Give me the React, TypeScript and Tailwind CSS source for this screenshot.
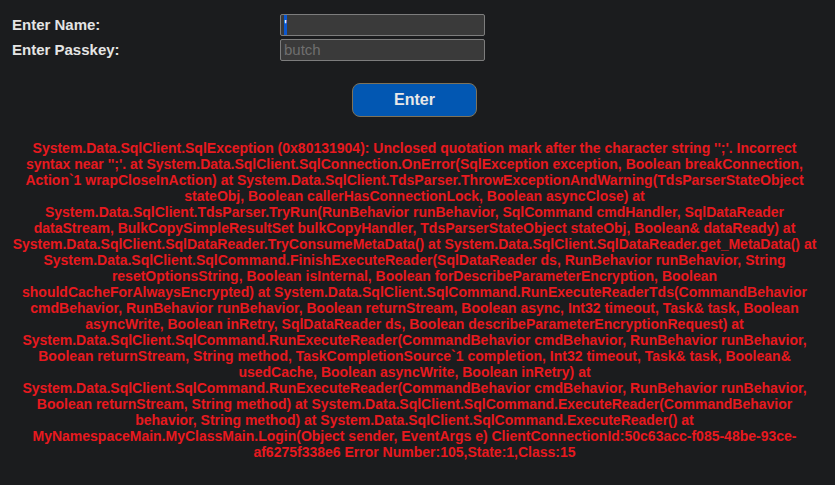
import { useEffect, useRef } from "react";

const errorText =
  "System.Data.SqlClient.SqlException (0x80131904): Unclosed quotation mark after the character string '';'. Incorrect syntax near '';'. at System.Data.SqlClient.SqlConnection.OnError(SqlException exception, Boolean breakConnection, Action`1 wrapCloseInAction) at System.Data.SqlClient.TdsParser.ThrowExceptionAndWarning(TdsParserStateObject stateObj, Boolean callerHasConnectionLock, Boolean asyncClose) at System.Data.SqlClient.TdsParser.TryRun(RunBehavior runBehavior, SqlCommand cmdHandler, SqlDataReader dataStream, BulkCopySimpleResultSet bulkCopyHandler, TdsParserStateObject stateObj, Boolean& dataReady) at System.Data.SqlClient.SqlDataReader.TryConsumeMetaData() at System.Data.SqlClient.SqlDataReader.get_MetaData() at System.Data.SqlClient.SqlCommand.FinishExecuteReader(SqlDataReader ds, RunBehavior runBehavior, String resetOptionsString, Boolean isInternal, Boolean forDescribeParameterEncryption, Boolean shouldCacheForAlwaysEncrypted) at System.Data.SqlClient.SqlCommand.RunExecuteReaderTds(CommandBehavior cmdBehavior, RunBehavior runBehavior, Boolean returnStream, Boolean async, Int32 timeout, Task& task, Boolean asyncWrite, Boolean inRetry, SqlDataReader ds, Boolean describeParameterEncryptionRequest) at System.Data.SqlClient.SqlCommand.RunExecuteReader(CommandBehavior cmdBehavior, RunBehavior runBehavior, Boolean returnStream, String method, TaskCompletionSource`1 completion, Int32 timeout, Task& task, Boolean& usedCache, Boolean asyncWrite, Boolean inRetry) at System.Data.SqlClient.SqlCommand.RunExecuteReader(CommandBehavior cmdBehavior, RunBehavior runBehavior, Boolean returnStream, String method) at System.Data.SqlClient.SqlCommand.ExecuteReader(CommandBehavior behavior, String method) at System.Data.SqlClient.SqlCommand.ExecuteReader() at MyNamespaceMain.MyClassMain.Login(Object sender, EventArgs e) ClientConnectionId:50c63acc-f085-48be-93ce-af6275f338e6 Error Number:105,State:1,Class:15";

export default function App() {
  const nameRef = useRef<HTMLInputElement>(null);

  // keep the injected quote selected, like right after typing it
  useEffect(() => {
    nameRef.current?.focus();
    nameRef.current?.select();
  }, []);

  return (
    <div className="min-h-screen bg-[#1b1c1e] font-['Liberation_Sans',Arial,sans-serif] pt-[14px] pl-3 pr-[18px]">
      <form className="grid grid-cols-[268px_205px] gap-y-[2px] items-center">
        <label className="text-[15px] font-bold text-[#e4e4e4]">Enter Name:</label>
        <input
          ref={nameRef}
          type="text"
          defaultValue="'"
          className="h-[22px] px-[3px] bg-[#3a3a3a] border border-[#7d7d7d] rounded-[2px] text-[15px] text-white outline-none selection:bg-[#0b57d0] selection:text-white"
        />
        <label className="text-[15px] font-bold text-[#e4e4e4]">Enter Passkey:</label>
        <input
          type="text"
          placeholder="butch"
          className="h-[22px] px-[3px] bg-[#3a3a3a] border border-[#7d7d7d] rounded-[2px] text-[15px] text-white outline-none placeholder:text-[#6f6f6f]"
        />
      </form>

      <div className="flex justify-center mt-[22px]">
        <button
          type="button"
          className="w-[125px] h-[34px] rounded-[8px] bg-[#0257b2] border border-[#7e7259] text-[16px] font-bold text-[#e8e8e8]"
        >
          Enter
        </button>
      </div>

      <p className="mt-[23px] text-center text-[14px] leading-[16px] font-bold text-[#e8191f] break-words">
        {errorText}
      </p>
    </div>
  );
}
